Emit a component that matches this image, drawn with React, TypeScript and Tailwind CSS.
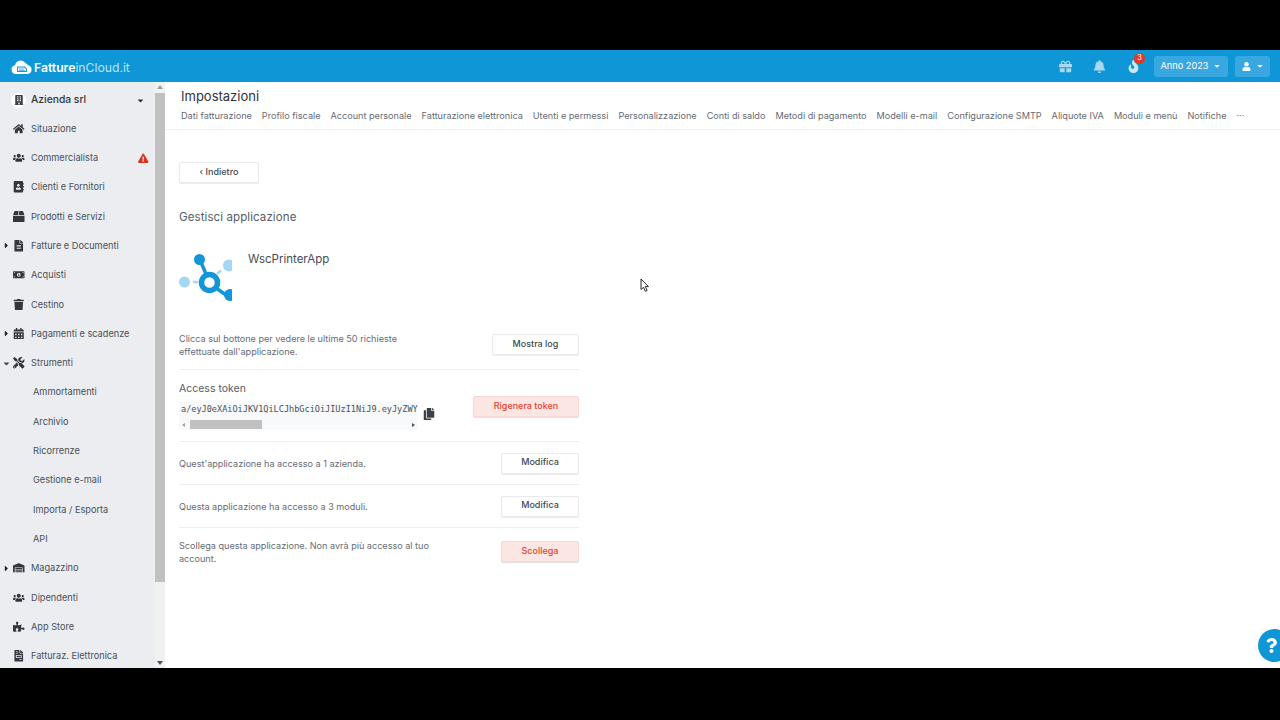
import React from 'react';
import {
  FaAddressBook,
  FaBell,
  FaBox,
  FaBuilding,
  FaCalendarAlt,
  FaCaretDown,
  FaCaretRight,
  FaCopy,
  FaExclamationTriangle,
  FaFileAlt,
  FaFileInvoice,
  FaFire,
  FaGift,
  FaHome,
  FaMoneyBillAlt,
  FaPuzzlePiece,
  FaQuestion,
  FaTools,
  FaTrash,
  FaUser,
  FaUsers,
  FaWarehouse,
} from 'react-icons/fa';

const TABS = [
  'Dati fatturazione',
  'Profilo fiscale',
  'Account personale',
  'Fatturazione elettronica',
  'Utenti e permessi',
  'Personalizzazione',
  'Conti di saldo',
  'Metodi di pagamento',
  'Modelli e-mail',
  'Configurazione SMTP',
  'Aliquote IVA',
  'Moduli e menù',
  'Notifiche',
  '···',
];

type NavItem = {
  label: string;
  icon?: React.ComponentType<{ className?: string }>;
  caret?: 'right' | 'down';
  warn?: boolean;
};

const NAV: NavItem[] = [
  { label: 'Situazione', icon: FaHome },
  { label: 'Commercialista', icon: FaUsers, warn: true },
  { label: 'Clienti e Fornitori', icon: FaAddressBook },
  { label: 'Prodotti e Servizi', icon: FaBox },
  { label: 'Fatture e Documenti', icon: FaFileAlt, caret: 'right' },
  { label: 'Acquisti', icon: FaMoneyBillAlt },
  { label: 'Cestino', icon: FaTrash },
  { label: 'Pagamenti e scadenze', icon: FaCalendarAlt, caret: 'right' },
  { label: 'Strumenti', icon: FaTools, caret: 'down' },
  { label: 'Ammortamenti' },
  { label: 'Archivio' },
  { label: 'Ricorrenze' },
  { label: 'Gestione e-mail' },
  { label: 'Importa / Esporta' },
  { label: 'API' },
  { label: 'Magazzino', icon: FaWarehouse, caret: 'right' },
  { label: 'Dipendenti', icon: FaUsers },
  { label: 'App Store', icon: FaPuzzlePiece },
  { label: 'Fatturaz. Elettronica', icon: FaFileInvoice },
];

const SidebarRow: React.FC<{ item: NavItem }> = ({ item }) => {
  const Icon = item.icon;
  return (
    <div className="relative flex h-[29.3px] shrink-0 items-center text-[9.2px] text-[#4a5058]">
      {item.caret === 'right' && <FaCaretRight className="absolute left-[2px] text-[9px] text-[#222]" />}
      {item.caret === 'down' && <FaCaretDown className="absolute left-[2px] text-[9px] text-[#444]" />}
      {Icon ? (
        <>
          <span className="flex w-[31px] shrink-0 justify-center pl-[9px] pr-[2px]">
            <Icon className="text-[11.5px] text-[#33373c]" />
          </span>
          <span>{item.label}</span>
        </>
      ) : (
        <span className="pl-[33px]">{item.label}</span>
      )}
      {item.warn && <FaExclamationTriangle className="absolute left-[138px] text-[10.5px] text-[#d9341f]" />}
    </div>
  );
};

const ActionButton: React.FC<{ label: string; danger?: boolean; className: string }> = ({ label, danger, className }) => (
  <button
    className={`flex h-[21px] shrink-0 items-center justify-center rounded-[2px] border pb-[2px] text-[9px] font-medium ${
      danger
        ? 'border-[#f5d9d5] bg-[#fbe6e3] text-[#e5432d] shadow-[0_1px_1px_rgba(0,0,0,0.12)]'
        : 'border-[#e8eaee] bg-white text-[#43484f] shadow-[0_1px_1px_rgba(0,0,0,0.08)]'
    } ${className}`}
  >
    {label}
  </button>
);

const CloudLogo = () => (
  <svg width="21" height="15" viewBox="0 0 21 15" className="shrink-0">
    <path
      d="M5 15a4.4 4.4 0 0 1-1-8.7A5.8 5.8 0 0 1 14.6 4.2 4.2 4.2 0 0 1 17 6.3 4.4 4.4 0 0 1 16.600 15Z"
      fill="#fff"
    />
    <path d="M6 7.500h8l2 2v3.500H6Z" fill="#0e96d6" />
    <path d="M7 8.500h6l2 1.500v2H7Z" fill="#fff" />
    <path d="M8 10h5M8 11.400h6" stroke="#0e96d6" strokeWidth="0.7" />
  </svg>
);

const AppLogo = () => (
  <svg width="53" height="47" viewBox="0 0 53 47" className="shrink-0">
    <circle cx="5.500" cy="28" r="5.500" fill="#a5d7f3" />
    <path d="M14 28h5" stroke="#a5d7f3" strokeWidth="2.500" />
    <circle cx="50" cy="11.500" r="6" fill="#a5d7f3" />
    <path d="M38 20l4-3.500" stroke="#a5d7f3" strokeWidth="2.500" />
    <circle cx="20.500" cy="5.500" r="5.500" fill="#1296d8" />
    <path d="M21 6l6 14" stroke="#1296d8" strokeWidth="3.500" />
    <circle cx="30.500" cy="28.500" r="8" fill="#fff" stroke="#1296d8" strokeWidth="5.500" />
    <path d="M37 34l10 7" stroke="#1296d8" strokeWidth="3.500" />
    <circle cx="51" cy="41" r="6" fill="#1296d8" />
  </svg>
);

const Divider = () => <div className="h-px bg-[#edf0f3]" />;

export default function App() {
  return (
    <div className="flex h-screen w-full flex-col overflow-hidden bg-black font-['Inter',sans-serif]">
      <div className="h-[50px] shrink-0 bg-black" />

      {/* top bar */}
      <header className="flex h-[32px] shrink-0 items-center bg-[#0e96d6] pl-[11px] pr-[10px]">
        <CloudLogo />
        <span className="ml-[2px] mt-[5px] text-[12.2px] leading-none text-white">
          <span className="font-semibold">Fatture</span>
          <span className="text-[#bfe3f5]">inCloud.it</span>
        </span>
        <div className="ml-auto flex items-center">
          <FaGift className="text-[13px] text-[#a9d9f1]" />
          <FaBell className="ml-[21px] text-[13px] text-[#a9d9f1]" />
          <span className="relative ml-[21px] flex">
            <FaFire className="text-[13px] text-[#cbe8f7]" />
            <span className="absolute left-[7px] top-[-7px] flex h-[11px] w-[11px] items-center justify-center rounded-full bg-[#de3a2b] text-[7.5px] text-white">
              3
            </span>
          </span>
          <div className="ml-[14px] flex h-[21px] w-[74px] items-center justify-center gap-[5px] rounded-[3px] bg-[#3aa8e0] text-[9.2px] text-white">
            Anno 2023
            <FaCaretDown className="text-[8px]" />
          </div>
          <div className="ml-[7px] flex h-[21px] w-[35px] items-center justify-center gap-[5px] rounded-[3px] bg-[#3aa8e0] text-white">
            <FaUser className="text-[9px]" />
            <FaCaretDown className="text-[8px]" />
          </div>
        </div>
      </header>

      <div className="relative flex h-[586px] shrink-0 bg-white">
        {/* sidebar */}
        <aside className="flex w-[155px] shrink-0 flex-col overflow-hidden bg-[#ebedf0] pt-[4px]">
          <div className="relative flex h-[28px] shrink-0 items-center text-[10.3px] font-medium text-[#30353b]">
            <span className="ml-[11px] flex h-[15px] w-[15px] items-center justify-center rounded-full bg-white">
              <FaBuilding className="text-[10px] text-[#3b4046]" />
            </span>
            <span className="ml-[5px]">Azienda srl</span>
            <FaCaretDown className="absolute left-[136px] text-[9px] text-[#333]" />
          </div>
          {NAV.map((item) => (
            <SidebarRow key={item.label} item={item} />
          ))}
        </aside>

        {/* sidebar scrollbar */}
        <div className="flex w-[10px] shrink-0 flex-col items-center bg-[#f1f1f1]">
          <div className="mt-[3px] h-0 w-0 border-x-[3px] border-b-[4px] border-x-transparent border-b-[#a0a0a0]" />
          <div className="mt-[4px] h-[489px] w-full bg-[#c1c1c1]" />
          <div className="mb-[3px] mt-auto h-0 w-0 border-x-[3px] border-t-[4px] border-x-transparent border-t-[#505050]" />
        </div>

        {/* main */}
        <main className="min-w-0 flex-1">
          <div className="h-[48px] border-b border-[#f0f1f3] pl-[16px] pt-[6px]">
            <h1 className="text-[13px] leading-[17px] text-[#2e3338]">Impostazioni</h1>
            <nav className="mt-[4px] flex gap-[10px] whitespace-nowrap text-[9.12px] leading-[14px] text-[#656b74]">
              {TABS.map((t) => (
                <span key={t}>{t}</span>
              ))}
            </nav>
          </div>

          <div className="w-[414px] pl-[14px]">
            <ActionButton label="‹ Indietro" className="mt-[32px] w-[80px]" />
            <h2 className="mt-[27px] text-[11.5px] leading-[14px] tracking-[0.1px] text-[#565c63]">
              Gestisci applicazione
            </h2>
            <div className="mt-[30px] flex h-[47px]">
              <AppLogo />
              <span className="ml-[16px] mt-[-3px] text-[11.5px] leading-[16px] text-[#474c53]">WscPrinterApp</span>
            </div>

            <div className="mt-[33px] flex h-[35px] items-start justify-between">
              <p className="mt-[-2px] w-[240px] text-[9.1px] leading-[13px] text-[#666c75]">
                Clicca sul bottone per vedere le ultime 50 richieste effettuate dall'applicazione.
              </p>
              <ActionButton label="Mostra log" className="w-[87px]" />
            </div>
            <Divider />

            <div className="flex h-[71px] justify-between">
              <div className="pt-[12px]">
                <p className="text-[10.5px] leading-[14px] text-[#565c63]">Access token</p>
                <div className="mt-[6px] flex items-start">
                  <div className="w-[239px] bg-[#f8f9fb]">
                    <div className="h-[17px] overflow-hidden whitespace-nowrap pl-[2px] font-['DejaVu_Sans_Mono',monospace] text-[8.55px] leading-[14px] text-[#4a5058]">
                      a/eyJ0eXAiOiJKV1QiLCJhbGciOiJIUzI1NiJ9.eyJyZWY
                    </div>
                    <div className="flex h-[11px] items-center">
                      <div className="ml-[3px] h-0 w-0 border-y-[2.5px] border-r-[3px] border-y-transparent border-r-[#a0a0a0]" />
                      <div className="ml-[5px] h-[9px] w-[72px] bg-[#c1c1c1]" />
                      <div className="ml-auto mr-[3px] h-0 w-0 border-y-[2.5px] border-l-[3px] border-y-transparent border-l-[#505050]" />
                    </div>
                  </div>
                  <FaCopy className="ml-[5px] mt-[6px] text-[12px] text-[#3c4148]" />
                </div>
              </div>
              <ActionButton label="Rigenera token" danger className="mt-[26px] w-[106px]" />
            </div>
            <Divider />

            <div className="flex h-[42px] items-center justify-between">
              <p className="mt-[1px] text-[9.1px] text-[#666c75]">Quest'applicazione ha accesso a 1 azienda.</p>
              <ActionButton label="Modifica" className="w-[78px]" />
            </div>
            <Divider />

            <div className="flex h-[42px] items-center justify-between">
              <p className="mt-[1px] text-[9.1px] text-[#666c75]">Questa applicazione ha accesso a 3 moduli.</p>
              <ActionButton label="Modifica" className="w-[78px]" />
            </div>
            <Divider />

            <div className="flex items-start justify-between pt-[11px]">
              <p className="w-[265px] text-[9.1px] leading-[13px] text-[#666c75]">
                Scollega questa applicazione. Non avrà più accesso al tuo account.
              </p>
              <ActionButton label="Scollega" danger className="mt-[2px] w-[78px]" />
            </div>
          </div>
        </main>

        {/* help bubble */}
        <div className="absolute left-[1258px] top-[547px] flex h-[33px] w-[33px] items-center justify-center rounded-full bg-[#0e96d6]">
          <FaQuestion className="mr-[7px] text-[15px] text-white" />
        </div>

        {/* mouse pointer */}
        <svg width="10" height="15" viewBox="0 0 10 15" className="absolute left-[640px] top-[196px]">
          <path d="M1 1v10.500l2.500-2.200 1.800 4 1.800-.8-1.800-3.900H8.500Z" fill="#fff" stroke="#111" strokeWidth="0.9" />
        </svg>
      </div>

      <div className="flex-1 bg-black" />
    </div>
  );
}
